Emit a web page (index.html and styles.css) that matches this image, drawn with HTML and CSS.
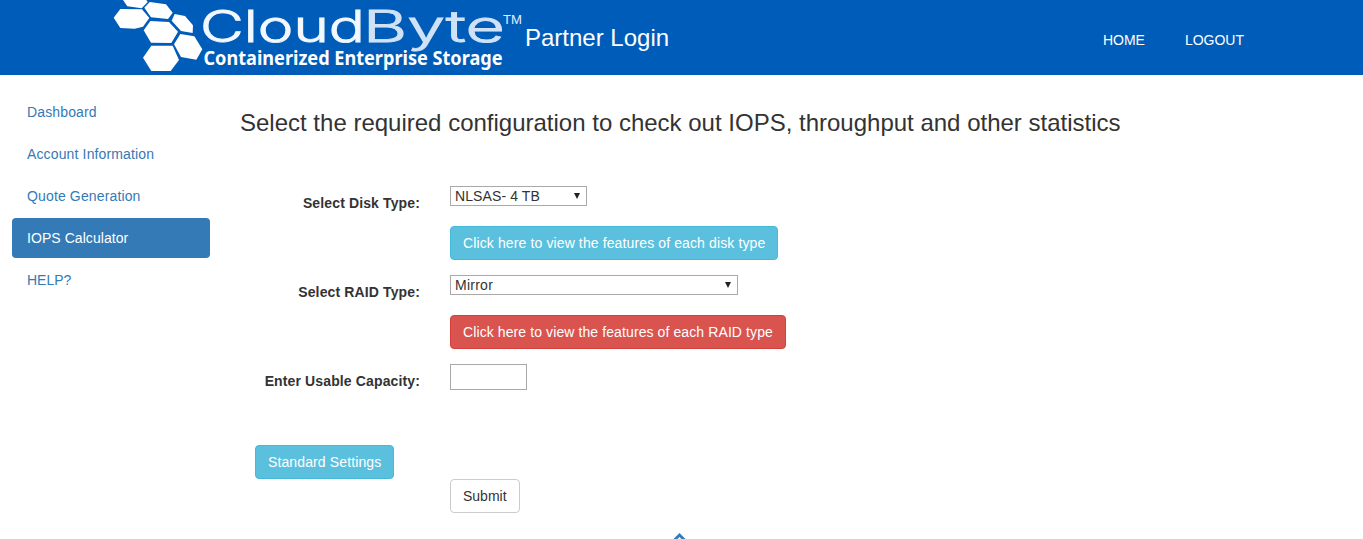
FILE: index.html
```html
<!DOCTYPE html>
<html lang="en">
<head>
<meta charset="utf-8">
<title>CloudByte Partner Login</title>
<link rel="stylesheet" href="styles.css">
</head>
<body>
<header class="header">
  <svg class="logo" width="420" height="75" viewBox="105 0 420 75" role="img" aria-label="CloudByte">
    <g class="hexes" transform="translate(105 0) scale(.33333)">
      <path d="M54 0L67 19L110 25L128 6L124 0Z"/>
      <path d="M118 23L134 6L183 13L203 38L189 57L138 52Z"/>
      <path d="M26 53L46 27L111 28L133 54L114 80L89 86L46 84Z"/>
      <path d="M200 62L209 42L240 48L264 76L263 99L228 93Z"/>
      <path d="M116 91L136 63L192 66L219 95L199 129L138 128Z"/>
      <path d="M207 133L226 102L268 109L292 148L274 179L228 171Z"/>
      <path d="M114 173L139 137L203 137L222 180L197 213L139 213Z"/>
    </g>
    <text class="word" x="200" y="41.5" textLength="165" lengthAdjust="spacingAndGlyphs">Cloud</text>
    <text class="word word-byte" x="363" y="41.5" textLength="142" lengthAdjust="spacingAndGlyphs">Byte</text>
    <text class="tm" x="503" y="24" textLength="19" lengthAdjust="spacingAndGlyphs">TM</text>
    <text class="tagline" x="203.500" y="65" textLength="299" lengthAdjust="spacingAndGlyphs">Containerized Enterprise Storage</text>
  </svg>
  <span class="brand">Partner Login</span>
  <nav class="topnav"><a>HOME</a><a>LOGOUT</a></nav>
</header>
<div class="page">
  <nav class="side">
    <a class="wide">Dashboard</a>
    <a class="wide">Account Information</a>
    <a class="wide">Quote Generation</a>
    <a class="active">IOPS Calculator</a>
    <a>HELP?</a>
  </nav>
  <main class="main">
    <h1>Select the required configuration to check out IOPS, throughput and other statistics</h1>
    <div class="form">
      <label>Select Disk Type:</label>
      <div class="field">
        <div class="select disk"><span>NLSAS- 4 TB</span><svg width="6" height="6"><path d="M0 0H6L3 6Z"/></svg></div>
        <button class="btn info">Click here to view the features of each disk type</button>
      </div>
      <label>Select RAID Type:</label>
      <div class="field">
        <div class="select raid"><span>Mirror</span><svg width="6" height="6"><path d="M0 0H6L3 6Z"/></svg></div>
        <button class="btn danger">Click here to view the features of each RAID type</button>
      </div>
      <label>Enter Usable Capacity:</label>
      <div class="field"><input class="capacity" type="text"></div>
    </div>
    <div class="actions">
      <button class="btn info">Standard Settings</button>
      <button class="btn plain">Submit</button>
    </div>
  </main>
</div>
<svg class="totop" width="14" height="8" viewBox="0 0 14 8"><path d="M6.500 1L13.500 8H9.500L6.500 5L3.500 8H-.5Z"/></svg>
</body>
</html>
```

FILE: styles.css
```css
* { box-sizing: border-box; }
body {
  margin: 0;
  height: 539px;
  overflow: hidden;
  position: relative;
  background: #fff;
  color: #333;
  font: 14px/20px "Liberation Sans", Arial, sans-serif;
}
.header {
  display: flex;
  height: 75px;
  padding-left: 105px;
  background: #005cb9;
  color: #fff;
}
.logo { display: block; flex: none; }
.hexes { fill: #fff; }
.word { font: 300 43px Inter, sans-serif; fill: #f3f8ff; stroke: #f3f8ff; stroke-width: .9; }
.word-byte { fill: #cfe2f7; stroke: #cfe2f7; }
.tm { font: 13px "Liberation Sans", Arial, sans-serif; fill: #e3eefa; }
.tagline { font: 700 19px "Noto Sans", sans-serif; fill: #fff; }
.brand { padding-top: 24px; font-size: 24px; line-height: 28px; white-space: nowrap; }
.topnav { display: flex; gap: 40px; margin-left: auto; padding: 30px 119px 0 0; }
.page { display: flex; }
.side { width: 210px; padding: 17px 0 0 12px; display: flex; flex-direction: column; gap: 2px; }
.side a { height: 40px; padding: 10px 15px; border-radius: 4px; color: #337ab7; }
.side .wide { letter-spacing: .14px; }
.side .active { background: #337ab7; color: #fff; letter-spacing: .06px; }
.main { flex: 1; padding: 35px 0 0 30px; }
h1 { margin: 0; font-weight: 400; font-size: 24px; line-height: 26px; white-space: nowrap; }
.form {
  display: grid;
  grid-template-columns: 180px 1fr;
  grid-template-rows: 89px 89px 81px;
  column-gap: 30px;
  margin-top: 50px;
}
label { text-align: right; font-weight: 700; padding-top: 7px; white-space: nowrap; letter-spacing: .13px; }
.field { display: flex; flex-direction: column; align-items: flex-start; }
.select {
  display: flex;
  justify-content: space-between;
  align-items: center;
  height: 20px;
  margin-bottom: 20px;
  padding: 0 6px 0 4px;
  border: 1px solid #a9a9a9;
  letter-spacing: .1px;
}
.disk { width: 137px; }
.raid { width: 288px; letter-spacing: .25px; }
.select path { fill: #222; }
.btn {
  height: 34px;
  padding: 6px 12px;
  border: 1px solid;
  border-radius: 4px;
  font: 14px/20px "Liberation Sans", Arial, sans-serif;
  white-space: nowrap;
}
.info { background: #5bc0de; border-color: #46b8da; color: #fff; letter-spacing: .12px; }
.danger { background: #d9534f; border-color: #d43f3a; color: #fff; letter-spacing: .1px; }
.plain { background: #fff; border-color: #ccc; color: #333; }
.capacity { width: 77px; height: 26px; border: 1px solid #a9a9a9; }
.actions { display: flex; flex-direction: column; align-items: flex-start; padding-left: 15px; }
.actions .plain { margin-left: 195px; }
.totop { position: absolute; left: 673px; top: 532px; }
.totop path { fill: #337ab7; }
```
